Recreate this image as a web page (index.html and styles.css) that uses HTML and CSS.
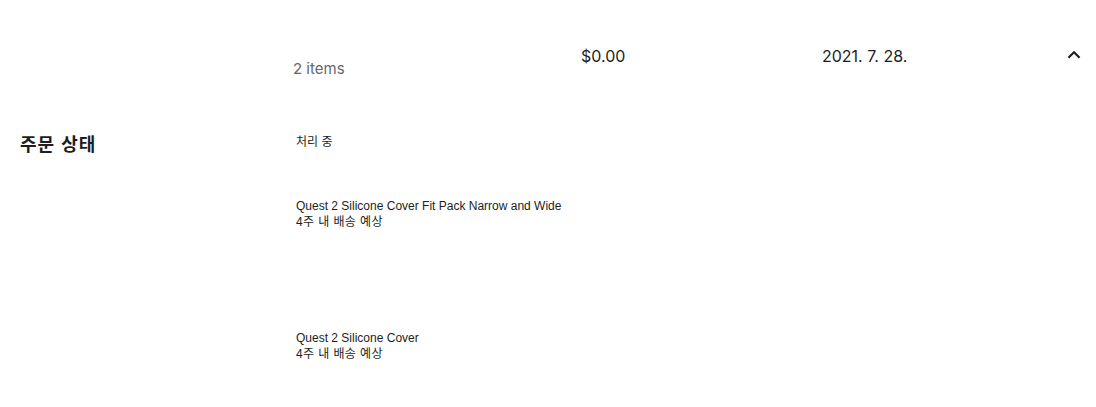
FILE: index.html
```html
<!DOCTYPE html>
<html lang="ko">
<head>
<meta charset="utf-8">
<link rel="stylesheet" href="styles.css">
</head>
<body>
<div class="page">
  <div class="summary">
    <div class="col-items">2 items</div>
    <div class="col-price">$0.00</div>
    <div class="col-date">2021. 7. 28.</div>
    <div class="col-toggle">
      <svg class="chev" viewBox="0 0 24 24" width="24" height="24"><path d="M7.2 15.6 12 10.8l4.8 4.8L18.3 14.1 12 7.8 5.7 14.1z" fill="#1c1e21"/></svg>
    </div>
  </div>
  <div class="status">
    <div class="label">주문 상태</div>
    <div class="content">
      <div class="state">처리 중</div>
      <div class="product">
        <div class="name">Quest 2 Silicone Cover Fit Pack Narrow and Wide</div>
        <div class="ship">4주 내 배송 예상</div>
      </div>
      <div class="product">
        <div class="name">Quest 2 Silicone Cover</div>
        <div class="ship">4주 내 배송 예상</div>
      </div>
    </div>
  </div>
</div>
</body>
</html>
```

FILE: styles.css
```css
html, body {
  margin: 0;
  padding: 0;
  background: #ffffff;
}
.page {
  width: 1096px;
  height: 407px;
  overflow: hidden;
  color: #1c1e21;
}
.summary {
  display: flex;
  align-items: flex-start;
  height: 133px;
  box-sizing: border-box;
  padding-top: 46px;
  font-family: Inter, "Noto Sans", sans-serif;
  font-size: 16px;
  line-height: 20px;
}
.col-items {
  margin-left: 293px;
  width: 288px;
  margin-top: 13px;
  font-size: 15px;
  color: #65676b;
}
.col-price {
  width: 241px;
}
.col-date {
  width: 240px;
}
.col-toggle {
  display: flex;
  margin-top: -3px;
}
.chev {
  display: block;
}
.status {
  display: flex;
  align-items: flex-start;
}
.label {
  width: 276px;
  padding-left: 20px;
  font-family: "Noto Sans CJK KR", sans-serif;
  font-weight: 700;
  font-size: 18px;
  letter-spacing: 1px;
  line-height: 20px;
}
.content {
  display: flex;
  flex-direction: column;
  font-family: "Liberation Sans", Arial, "Noto Sans CJK KR", sans-serif;
  font-size: 12px;
  line-height: 16px;
}
.state {
  font-family: "Noto Sans CJK KR", sans-serif;
  margin-bottom: 49px;
}
.product {
  margin-bottom: 100px;
}
.ship {
  font-family: "Liberation Sans", "Noto Sans CJK KR", sans-serif;
  letter-spacing: 0.4px;
}
```
